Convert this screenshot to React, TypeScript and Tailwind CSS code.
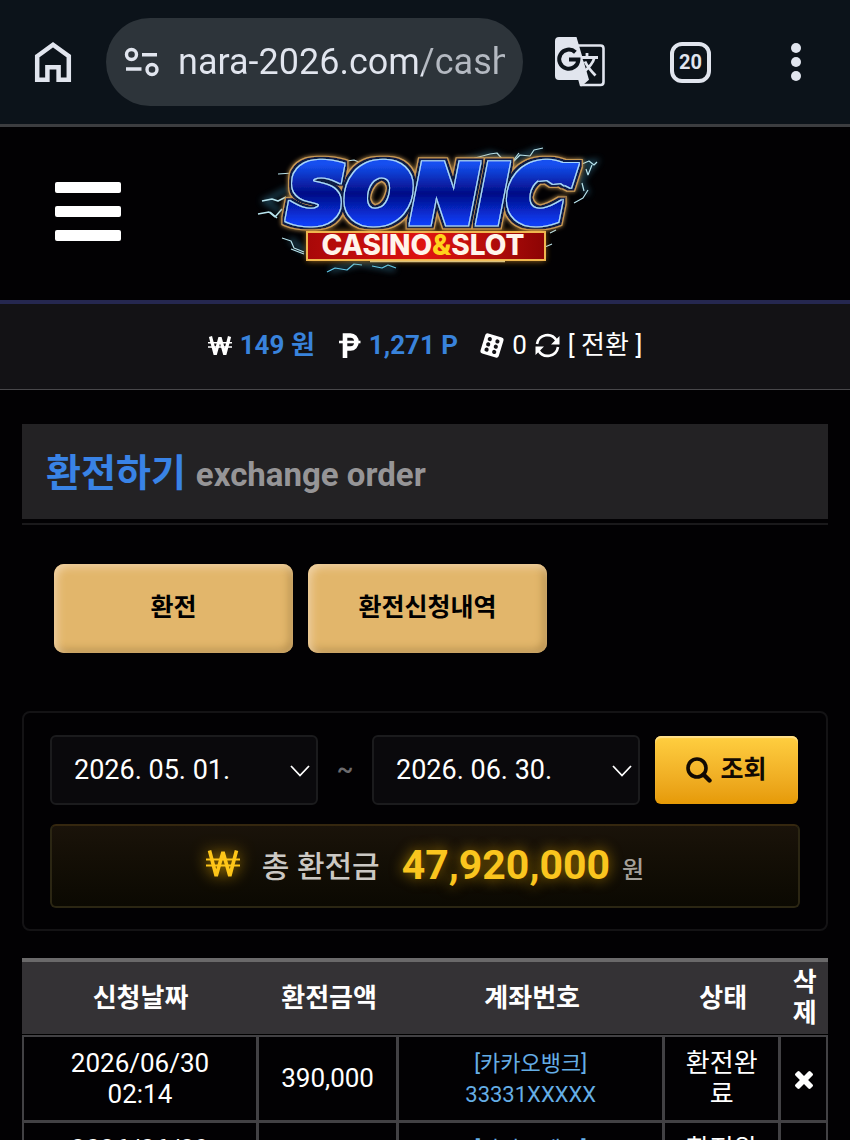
import { useState } from "react"

interface Withdrawal {
  date: string
  time: string
  amount: string
  bank: string
  account: string
  status: string
}

const withdrawals: Withdrawal[] = [
  { date: "2026/06/30", time: "02:14", amount: "390,000", bank: "[카카오뱅크]", account: "33331XXXXX", status: "환전완료" },
  { date: "2026/06/29", time: "23:41", amount: "390,000", bank: "[카카오뱅크]", account: "33331XXXXX", status: "환전완료" },
]

function HomeIcon() {
  return (
    <svg viewBox="0 0 38 42" className="h-[42px] w-[38px]" fill="none" stroke="currentColor" strokeWidth="4.5">
      <path d="M3.2 15.2 19 3.8 34.8 15.2V38.8H24.6V26.2H13.4V38.8H3.2Z" />
    </svg>
  )
}

function TuneIcon() {
  return (
    <svg viewBox="0 0 36 30" className="h-[30px] w-9 shrink-0" fill="none" stroke="currentColor" strokeWidth="3.4">
      <circle cx="7.5" cy="7.5" r="5" />
      <path d="M18 7.8H33M2 22H17.5" />
      <circle cx="28" cy="22.5" r="5" />
    </svg>
  )
}

function TranslateIcon() {
  return (
    <svg viewBox="0 0 50 50" className="h-[50px] w-[50px]" fill="none">
      <path d="M22 8.5H45.5Q48.5 8.5 48.5 11.5V45Q48.5 48 45.5 48H26" stroke="currentColor" strokeWidth="2.6" />
      <path d="M4 0H21.5L34 42.7 26.5 49.3H25L23.3 43H4Q0 43 0 39V4Q0 0 4 0Z" fill="currentColor" />
      <path d="M27.5 22H35L31.5 29Z" fill="#0c131a" />
      <path
        d="M26 20.5H43M32 16V20.5M39.5 20.5Q37.5 28 28 35.5M30 24.5Q33 31 40.5 38.5"
        stroke="currentColor"
        strokeWidth="2.8"
      />
      <path d="M20.4 15.2A9.6 9.6 0 1 0 23.4 22.6H14" stroke="#0c131a" strokeWidth="4" />
    </svg>
  )
}

function WonIcon({ className, weight }: { className: string; weight: number }) {
  return (
    <svg viewBox="0 0 34 28" className={className} fill="none" stroke="currentColor">
      <path d="M3.5 .5 10.2 26 17 2 23.8 26 30.5 .5" strokeWidth={weight} strokeLinejoin="bevel" />
      <path d="M0 9.5H34M0 15.5H34" strokeWidth="2.2" />
    </svg>
  )
}

function PesoIcon() {
  return (
    <svg viewBox="0 0 22 25" className="h-[25px] w-[22px]" fill="none" stroke="currentColor">
      <path d="M6 25V2.5H11.5A5.5 6 0 0 1 11.5 15.5H6" strokeWidth="4.6" />
      <path d="M0 9H21.5" strokeWidth="2.6" />
    </svg>
  )
}

function DiceIcon() {
  return (
    <svg viewBox="0 0 24 25" className="h-[25px] w-6">
      <g transform="rotate(17 12 12.5)">
        <rect x="2.5" y="2" width="19" height="21" rx="2.5" fill="currentColor" />
        {[7, 12.5, 18].map((y) => (
          <g key={y} fill="#131215">
            <circle cx="8" cy={y} r="2.1" />
            <circle cx="16" cy={y} r="2.1" />
          </g>
        ))}
      </g>
    </svg>
  )
}

function SyncIcon() {
  return (
    <svg viewBox="0 0 25 25" className="h-[25px] w-[25px]" fill="none" stroke="currentColor" strokeWidth="2.6">
      <path d="M2 11A10.5 10.5 0 0 1 21.5 7.5M23 14A10.5 10.5 0 0 1 3.5 17.5" />
      <path d="M24.5 3V11.5H16ZM.5 22V13.5H9Z" fill="currentColor" stroke="none" />
    </svg>
  )
}

function SearchIcon() {
  return (
    <svg viewBox="0 0 26 26" className="h-[26px] w-[26px]" fill="none" stroke="currentColor">
      <circle cx="11" cy="11" r="9" strokeWidth="3.6" />
      <path d="M17.5 17.5 23.5 23.5" strokeWidth="4.4" strokeLinecap="round" />
    </svg>
  )
}

function CloseIcon() {
  return (
    <svg viewBox="110 366 1188 1188" className="h-[18px] w-[18px]" fill="currentColor">
      <path d="M1298 1322q0 40-28 68l-136 136q-28 28-68 28t-68-28l-294-294-294 294q-28 28-68 28t-68-28l-136-136q-28-28-28-68t28-68l294-294-294-294q-28-28-28-68t28-68l136-136q28-28 68-28t68 28l294 294 294-294q28-28 68-28t68 28l136 136q28 28 28 68t-28 68l-294 294 294 294q28 28 28 68z" />
    </svg>
  )
}

function Logo() {
  return (
    <svg viewBox="-5 0 360 145" className="h-[145px] w-[360px]" role="img" aria-label="SONIC CASINO&SLOT">
      <defs>
        <linearGradient id="blue" gradientUnits="userSpaceOnUse" x1="0" y1="25" x2="0" y2="84">
          <stop offset="0" stopColor="#1450f0" />
          <stop offset=".5" stopColor="#030c86" />
          <stop offset="1" stopColor="#0a3cf5" />
        </linearGradient>
        <linearGradient id="red" x1="0" y1="0" x2="1" y2="0">
          <stop offset="0" stopColor="#a80808" />
          <stop offset=".5" stopColor="#e01410" />
          <stop offset="1" stopColor="#8c0404" />
        </linearGradient>
        <filter id="glow" x="-20%" y="-40%" width="140%" height="180%">
          <feGaussianBlur stdDeviation="3" />
        </filter>
        {/* Stacked outlines: light blue, navy, gold, then a warm glow */}
        <filter id="outline" filterUnits="userSpaceOnUse" x="-5" y="0" width="360" height="145">
          <feMorphology in="SourceAlpha" operator="dilate" radius="1" result="a1" />
          <feMorphology in="SourceAlpha" operator="dilate" radius="3" result="a2" />
          <feMorphology in="SourceAlpha" operator="dilate" radius="4" result="a3" />
          <feFlood floodColor="#a6d8ff" />
          <feComposite in2="a1" operator="in" result="light" />
          <feFlood floodColor="#081a44" />
          <feComposite in2="a2" operator="in" result="navy" />
          <feFlood floodColor="#c99a55" />
          <feComposite in2="a3" operator="in" result="gold" />
          <feGaussianBlur in="gold" stdDeviation="2" result="halo" />
          <feMerge>
            <feMergeNode in="halo" />
            <feMergeNode in="gold" />
            <feMergeNode in="navy" />
            <feMergeNode in="light" />
            <feMergeNode in="SourceGraphic" />
          </feMerge>
        </filter>
      </defs>

      {/* Lightning */}
      <g fill="none" stroke="#2e6f8c" strokeWidth="5" opacity=".6" filter="url(#glow)">
        <path d="M215 23 240 15 260 22 291 10M38 50 15 62 30 72M325 25 345 23 330 42 338 55M80 131 110 124 145 130M40 100 55 113" />
      </g>
      <g fill="none" stroke="#b8e4ee" strokeWidth="1.2" strokeLinejoin="bevel">
        <path d="M210 26 225 19 240 15 247 14 254 22 263 23 270 16 280 17 284 11 293 9M262 23 269 14" />
        <path d="M90 23 104 21 111 24 118 23M55 24 58 30M28 35 43 34" />
        <path d="M12 62 22 60 28 62 36 58M8 75 19 73 25 78 32 70M20 73 27 79" strokeWidth="1.6" />
        <path d="M332 25 339 22 344 26 347 23M342 26 338 36 336 30M338 51 333 59 324 64M332 44 334 52" />
        <path d="M32 99 41 102 44 109 54 113M41 110 54 115M295 108 302 105M300 94 306 91" />
        <path d="M77 133 85 129 97 131 104 125 112 126M122 127 132 129 138 126 146 129" stroke="#62c7e8" />
      </g>

      <g filter="url(#outline)">
        <text
          x="38"
          y="83"
          fontFamily="'DejaVu Sans', sans-serif"
          fontSize="79"
          fontWeight="700"
          fontStyle="italic"
          fill="url(#blue)"
          stroke="url(#blue)"
          strokeWidth="7"
        >
          SONIC
        </text>
        <path d="M292 24H329L321 49 311 44 303 45 297 41 288 42Z" fill="url(#blue)" />
      </g>

      <rect x="57" y="92" width="238" height="30" fill="#e59a26" opacity=".7" filter="url(#glow)" />
      <rect x="57" y="93" width="238" height="28" fill="url(#red)" stroke="#efb64f" strokeWidth="2" />
      <path d="M120 122.5H255" stroke="#ffe69a" strokeWidth="1.5" opacity=".8" />
      <text x="173" y="116" textAnchor="middle" fontFamily="Inter, sans-serif" fontSize="28" fontWeight="800" fill="#fff4ea">
        CASINO<tspan fill="#ffd21c">&amp;</tspan>SLOT
      </text>
    </svg>
  )
}

interface DateSelectProps {
  label: string
  value: string
}

function DateSelect({ label, value }: DateSelectProps) {
  return (
    <div className="relative flex-1">
      <select
        aria-label={label}
        className="h-[70px] w-full appearance-none rounded-md border-2 border-[#1b1b1d] bg-[#0a090c] px-[22px] text-[27px] text-white"
      >
        <option>{value}</option>
      </select>
      <svg
        viewBox="0 0 20 12"
        className="pointer-events-none absolute top-[30px] right-2 h-3 w-5"
        fill="none"
        stroke="white"
        strokeWidth="1.8"
      >
        <path d="M1 1 10 10.5 19 1" />
      </svg>
    </div>
  )
}

export default function App() {
  const [rows, setRows] = useState(withdrawals)

  return (
    <div className="h-screen overflow-hidden bg-[#020103] font-[Roboto,'Noto_Sans_CJK_KR',sans-serif] text-white">
      {/* Browser bar */}
      <header className="flex h-[127px] items-center border-b-3 border-[#3c3d40] bg-[#0c131a] pr-[42px] pl-[34px] text-[#e1e5ee]">
        <button aria-label="Home" className="shrink-0">
          <HomeIcon />
        </button>
        <div className="ml-[34px] flex h-[88px] min-w-0 flex-1 items-center gap-[18px] rounded-full bg-[#2d343a] px-[18px]">
          <TuneIcon />
          <input
            aria-label="Address"
            defaultValue="nara-2026.com/cash"
            className="w-full min-w-0 bg-linear-to-r from-[#e1e5ee] from-75% to-[#b4b9c1] to-75% bg-clip-text text-[36px] text-transparent outline-none"
          />
        </div>
        <button aria-label="Translate" className="ml-8 shrink-0">
          <TranslateIcon />
        </button>
        <button
          aria-label="Tabs"
          className="ml-[65px] flex size-[41px] shrink-0 items-center justify-center rounded-xl border-4 border-current text-[20px] font-bold"
        >
          20
        </button>
        <button aria-label="Menu" className="ml-[73px] flex w-6 shrink-0 justify-center">
          <svg viewBox="0 0 10 38" className="h-[38px] w-[10px]" fill="currentColor">
            <circle cx="5" cy="5" r="5" />
            <circle cx="5" cy="19" r="5" />
            <circle cx="5" cy="33" r="5" />
          </svg>
        </button>
      </header>

      {/* Site header */}
      <div className="grid h-[177px] grid-cols-[1fr_auto_1fr] items-center border-b-4 border-[#25274f] pb-1">
        <button aria-label="메뉴" className="ml-[55px] flex w-[66px] flex-col gap-[13px]">
          <span className="h-[11px] w-full rounded-xs bg-white" />
          <span className="h-[11px] w-full rounded-xs bg-white" />
          <span className="h-[11px] w-full rounded-xs bg-white" />
        </button>
        <a href="#">
          <Logo />
        </a>
      </div>

      {/* Balance */}
      <div className="flex h-[86px] items-center justify-center border-b border-[#48474a] bg-[#131215] pb-0.5 text-[26px]">
        <WonIcon className="mr-2 h-5 w-6" weight={4.6} />
        <span className="mr-6 font-bold text-[#3983dc]">149 원</span>
        <PesoIcon />
        <span className="mr-[22px] ml-2 font-bold text-[#3983dc]">1,271 P</span>
        <DiceIcon />
        <span className="mx-2">0</span>
        <SyncIcon />
        <button className="ml-2">[ 전환 ]</button>
      </div>

      <main className="px-[22px] pt-[34px]">
        <div className="border-b-2 border-[#1a191b] pb-1">
          <h1 className="flex h-[95px] items-baseline gap-[10px] bg-[#232224] px-6 pt-[22px] text-[38px] leading-[54px] font-bold text-[#3983e6]">
            환전하기 <small className="text-[33px] text-[#969597]">exchange order</small>
          </h1>
        </div>

        <div className="mt-[39px] flex gap-[15px] px-8 text-[25px] font-bold text-black">
          <button className="h-[89px] w-[239px] rounded-[10px] bg-[#e2b66b] pb-0.5 shadow-[inset_3px_3px_8px_#f2d4a8,inset_-3px_-3px_8px_#b18a49]">
            환전
          </button>
          <button className="h-[89px] w-[239px] rounded-[10px] bg-[#e2b66b] pb-0.5 shadow-[inset_3px_3px_8px_#f2d4a8,inset_-3px_-3px_8px_#b18a49]">
            환전신청내역
          </button>
        </div>

        {/* Search */}
        <section className="mt-[58px] rounded-lg border-2 border-[#141315] px-[26px] pt-[22px] pb-[21px]">
          <div className="flex items-center pr-0.5">
            <DateSelect label="시작일" value="2026. 05. 01." />
            <span className="w-[54px] text-center text-[25px] font-medium text-[#6c6b6e]">~</span>
            <DateSelect label="종료일" value="2026. 06. 30." />
            <button className="ml-[15px] flex h-[68px] w-[143px] items-center justify-center gap-2 rounded-md bg-linear-to-b from-[#ffcf40] to-[#e69a05] text-[25px] font-bold text-[#120a02] shadow-[inset_0_2px_1px_#ffe08a]">
              <SearchIcon />
              조회
            </button>
          </div>
          <div className="mt-[19px] flex h-[84px] items-center justify-center rounded-md border-2 border-[#2b2613] border-t-[#35270f] bg-linear-to-b from-[#1a130a] to-[#0b0902]">
            <WonIcon className="mb-1 h-7 w-[34px] text-[#fec619] drop-shadow-[0_0_8px_#c79300]" weight={3.6} />
            <span className="ml-[22px] text-[30px] font-medium text-[#cbc8c3]">총 환전금</span>
            <strong className="ml-[22px] text-[41px] font-bold text-[#fac51e] [text-shadow:0_0_14px_#a87b00]">47,920,000</strong>
            <span className="mt-2 ml-3 text-[24px] font-medium text-[#a5a099]">원</span>
          </div>
        </section>

        <table className="mt-[27px] w-full table-fixed border-separate border-spacing-0 text-center text-[26px] leading-[31px]">
          <colgroup>
            <col className="w-[29.4%]" />
            <col className="w-[17.4%]" />
            <col className="w-[33%]" />
            <col className="w-[14.4%]" />
            <col />
          </colgroup>
          <thead>
            <tr className="h-[77px] bg-[#343235] *:border-t-4 *:border-b *:border-t-[#6a696a] *:border-b-black">
              <th>신청날짜</th>
              <th>환전금액</th>
              <th>계좌번호</th>
              <th>상태</th>
              <th className="px-2 break-all">삭제</th>
            </tr>
          </thead>
          <tbody>
            {rows.map((row) => (
              <tr
                key={row.date}
                className="h-[86px] *:border-r-3 *:border-b-3 *:border-[#424144] first:h-[88px] first:*:border-t-2 *:first:border-l-2 *:last:border-r-2"
              >
                <td>
                  {row.date}
                  <br />
                  {row.time}
                </td>
                <td>{row.amount}</td>
                <td className="text-[22px] text-[#65aee6]">
                  {row.bank}
                  <br />
                  {row.account}
                </td>
                <td className="px-5 break-all">{row.status}</td>
                <td>
                  <button
                    aria-label="삭제"
                    className="align-middle"
                    onClick={() => setRows(rows.filter((r) => r !== row))}
                  >
                    <CloseIcon />
                  </button>
                </td>
              </tr>
            ))}
          </tbody>
        </table>
      </main>
    </div>
  )
}
